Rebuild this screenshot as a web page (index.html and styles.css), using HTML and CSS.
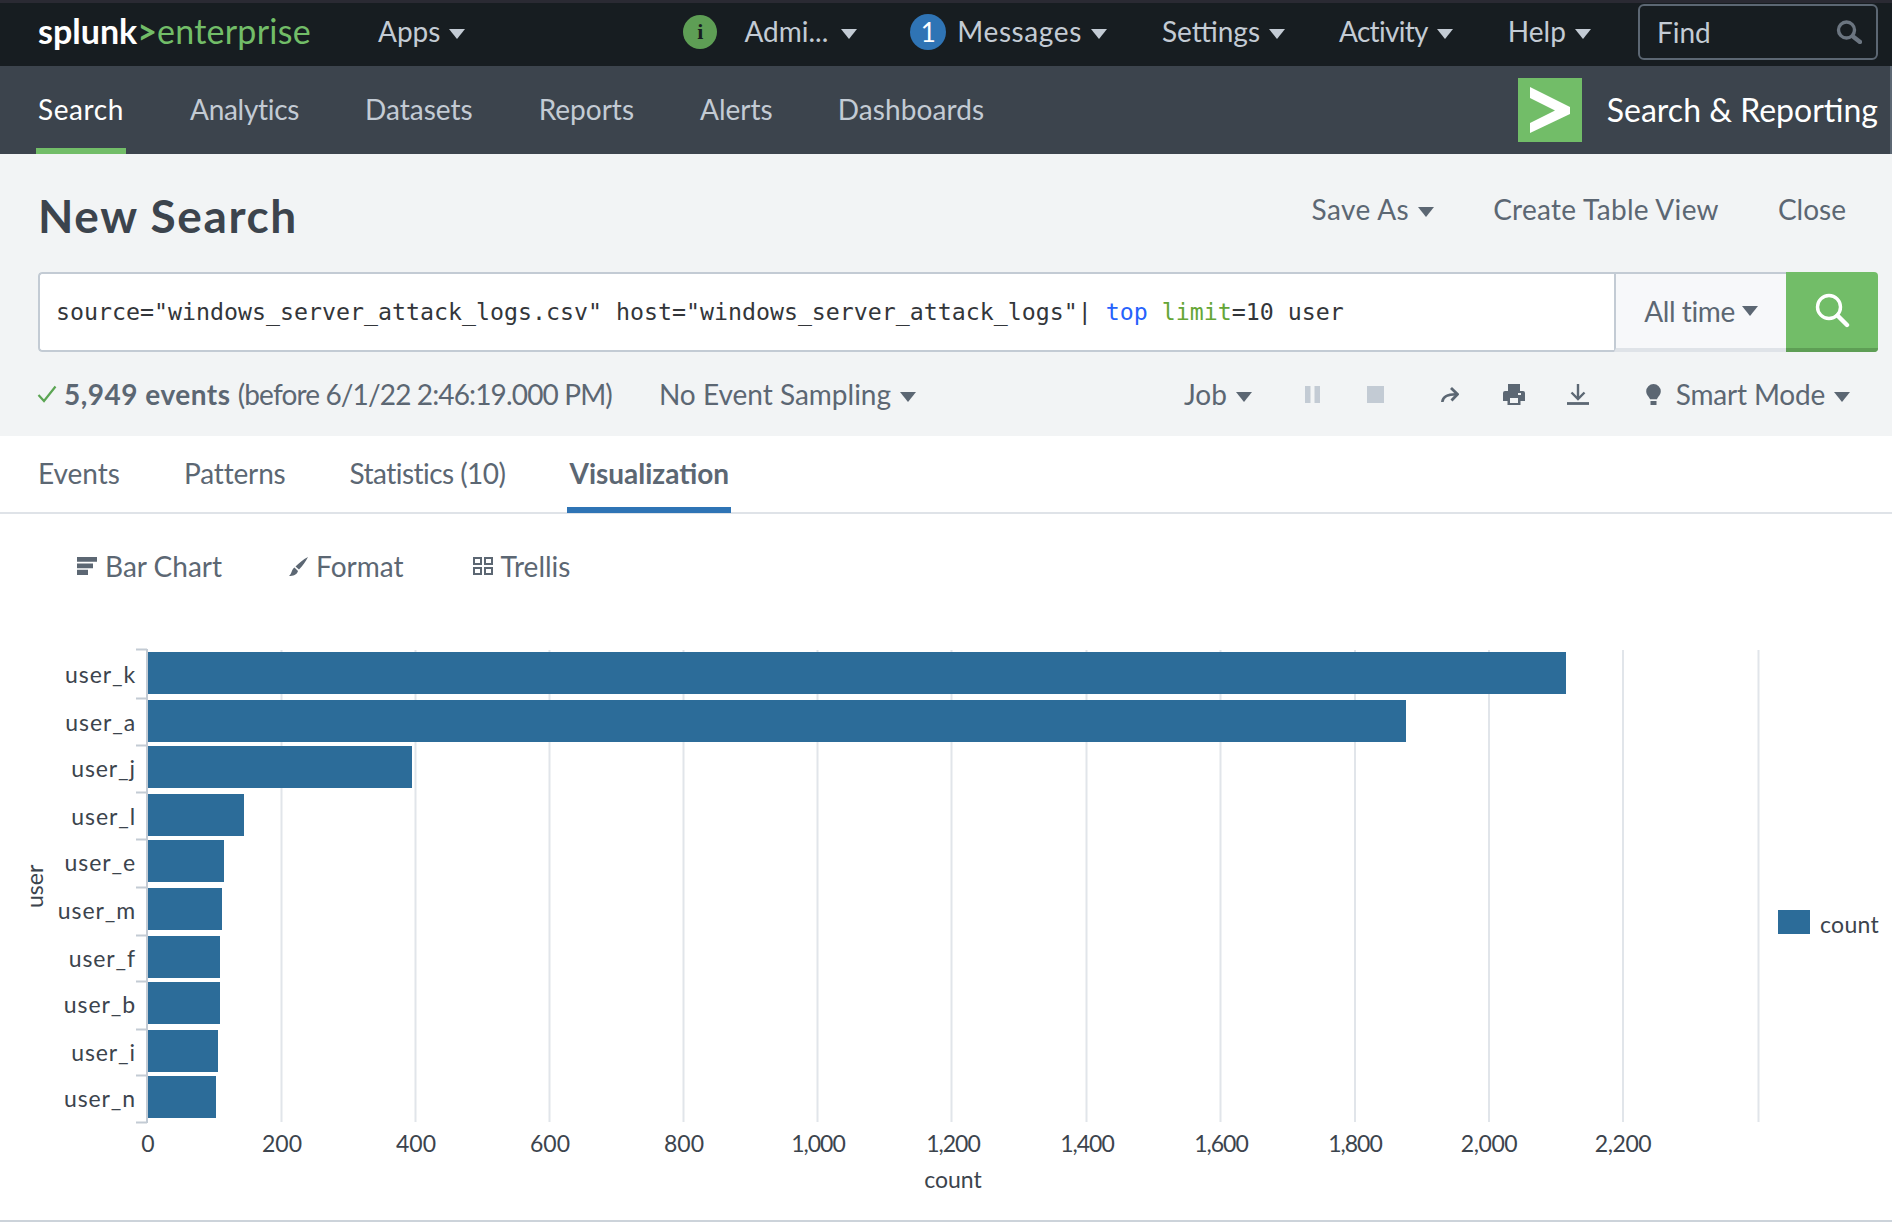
FILE: index.html
```html
<!DOCTYPE html>
<html lang="en">
<head>
<meta charset="utf-8">
<title>New Search</title>
<link rel="stylesheet" href="styles.css">
</head>
<body>
<header class="topbar">
  <div class="logo"><span class="logo-a">splunk</span><span class="logo-gt">&gt;</span><span class="logo-b">enterprise</span></div>
  <div class="top-item apps">Apps<i class="caret"></i></div>
  <div class="info-dot">i</div>
  <div class="top-item admin">Admi...<i class="caret wide"></i></div>
  <div class="msg-dot">1</div>
  <div class="top-item msgs">Messages<i class="caret"></i></div>
  <div class="top-item settings">Settings<i class="caret"></i></div>
  <div class="top-item activity">Activity<i class="caret"></i></div>
  <div class="top-item help">Help<i class="caret"></i></div>
  <div class="find"><span>Find</span>
    <svg class="find-icon" viewBox="0 0 26 24" width="26" height="24"><circle cx="10.500" cy="10" r="8" fill="none" stroke="#6b7580" stroke-width="3.400"/><path d="M17 16.500 24 22" stroke="#6b7580" stroke-width="4.400" stroke-linecap="round"/></svg>
  </div>
</header>

<nav class="appbar">
  <a class="app-link active">Search</a>
  <a class="app-link tight">Analytics</a>
  <a class="app-link">Datasets</a>
  <a class="app-link">Reports</a>
  <a class="app-link">Alerts</a>
  <a class="app-link dash">Dashboards</a>
  <div class="app-brand">
    <svg class="app-logo" viewBox="0 0 64 64" width="64" height="64"><rect width="64" height="64" fill="#72bd68"/><path d="M12 9 52 29V36L12 55V45L37 32.500 12 20Z" fill="#fff"/></svg>
    <span class="app-title">Search &amp; Reporting</span>
  </div>
</nav>

<section class="search-head">
  <div class="title-row">
    <h1 class="title">New Search</h1>
    <div class="title-actions">
      <span class="act save">Save As<i class="caret dark"></i></span>
      <span class="act create">Create Table View</span>
      <span class="act">Close</span>
    </div>
  </div>
  <div class="search-bar">
    <div class="query"><span class="query-text">source="windows_server_attack_logs.csv" host="windows_server_attack_logs"| <span class="q-cmd">top</span> <span class="q-arg">limit</span>=10 user</span></div>
    <div class="time">All time<i class="caret dark"></i></div>
    <div class="go">
      <svg viewBox="0 0 36 36" width="36" height="36"><circle cx="15" cy="15" r="11.500" fill="none" stroke="#fff" stroke-width="3.400"/><path d="M23.500 23.500 33 33" stroke="#fff" stroke-width="4.400" stroke-linecap="round"/></svg>
    </div>
  </div>
  <div class="status-row">
    <svg class="check" viewBox="0 0 20 18" width="20" height="18"><path d="M1.500 10 7 16 18.500 1.500" fill="none" stroke="#5ba553" stroke-width="2.200"/></svg>
    <span class="count"><b>5,949 events</b> <span class="before">(before 6/1/22 2:46:19.000 PM)</span></span>
    <span class="sampling">No Event Sampling<i class="caret dark"></i></span>
    <div class="job-tools">
      <span class="job">Job<i class="caret dark"></i></span>
      <svg class="tool pause" viewBox="0 0 15 17" width="15" height="17"><path d="M0 0h5.500v17H0zM9.500 0H15v17H9.500z" fill="#c3cbd4"/></svg>
      <svg class="tool stop" viewBox="0 0 17 17" width="17" height="17"><rect width="17" height="17" fill="#c3cbd4"/></svg>
      <svg class="tool share" viewBox="0 0 18 15" width="18" height="15"><path d="M1.300 15C1.800 9.500 6 7.300 15 7.300" fill="none" stroke="#5c6773" stroke-width="2.600"/><path d="M10 1 16.500 7.300 10.500 13.500" fill="none" stroke="#5c6773" stroke-width="2.800"/></svg>
      <svg class="tool print" viewBox="0 0 22 21" width="22" height="21"><path d="M5 0h12v7h3a2 2 0 0 1 2 2v8h-4.500v4h-13v-4H0V9a2 2 0 0 1 2-2h3Z" fill="#5c6773"/><path d="M7 14h8v5H7z" fill="#f2f4f5"/><path d="M15 9h3v2h-3z" fill="#f2f4f5"/></svg>
      <svg class="tool dl" viewBox="0 0 22 21" width="22" height="21"><path d="M11 0v14" stroke="#5c6773" stroke-width="2.400"/><path d="M4.500 8.500 11 15l6.500-6.500" fill="none" stroke="#5c6773" stroke-width="2.400"/><path d="M0 19.500h22" stroke="#5c6773" stroke-width="2.800"/></svg>
      <svg class="tool bulb" viewBox="0 0 15 21" width="15" height="21"><path d="M7.500 0a7.300 7.300 0 0 1 7.300 7.300c0 3.700-3 5.500-3.800 8H4c-.8-2.500-3.800-4.300-3.800-8A7.300 7.300 0 0 1 7.500 0Z" fill="#5c6773"/><rect x="4.500" y="17" width="6" height="4" fill="#5c6773"/></svg>
      <span class="mode">Smart Mode<i class="caret dark"></i></span>
    </div>
  </div>
</section>

<nav class="tabs">
  <a class="tab">Events</a>
  <a class="tab patterns">Patterns</a>
  <a class="tab stats">Statistics (10)</a>
  <a class="tab current">Visualization</a>
</nav>

<div class="viz-tools">
  <span class="viz-tool bar-tool"><svg viewBox="0 0 20 18" width="20" height="18"><path d="M0 0h20v4.800H0zM0 6.400h16v4.800H0zM0 12.800h11V18H0z" fill="#5c6773"/></svg>Bar Chart</span>
  <span class="viz-tool format-tool"><svg viewBox="0 0 19 19" width="19" height="19"><path d="M19 0C16.500 5 13.500 9 10 12.500L6.500 9.500C10 6 14 2.500 19 0ZM5.500 10.500 9 14C8 18 4 19 0 19 3 17 2.500 12 5.500 10.500Z" fill="#5c6773"/></svg>Format</span>
  <span class="viz-tool trellis-tool"><svg viewBox="0 0 20 18" width="20" height="18"><path d="M1 1h7v6H1zM12 1h7v6h-7zM1 11h7v6H1zM12 11h7v6h-7z" fill="none" stroke="#5c6773" stroke-width="2"/></svg>Trellis</span>
</div>

<svg class="chart" viewBox="0 620 1892 600" width="1892" height="600">
  <g class="grid">
    <path d="M281.500 650V1122M415.500 650V1122M549.500 650V1122M683.500 650V1122M817.500 650V1122M951.500 650V1122M1086.500 650V1122M1220.500 650V1122M1355 650V1122M1489 650V1122M1623 650V1122M1758.500 650V1122"/>
  </g>
  <g class="bars">
    <rect x="148" y="652" width="1418" height="42"/>
    <rect x="148" y="700" width="1258" height="42"/>
    <rect x="148" y="746" width="264" height="42"/>
    <rect x="148" y="794" width="96" height="42"/>
    <rect x="148" y="840" width="76" height="42"/>
    <rect x="148" y="888" width="74" height="42"/>
    <rect x="148" y="936" width="72" height="42"/>
    <rect x="148" y="982" width="72" height="42"/>
    <rect x="148" y="1030" width="70" height="42"/>
    <rect x="148" y="1076" width="68" height="42"/>
  </g>
  <path class="axis" d="M147 649V1123M136 649.500H147M136 698.500H147M136 745.500H147M136 792.500H147M136 839.500H147M136 887.500H147M136 935.500H147M136 981.500H147M136 1029.500H147M136 1075.500H147M136 1122.500H147"/>
  <g class="ylabels">
    <text x="136" y="683">user_k</text>
    <text x="136" y="731">user_a</text>
    <text x="136" y="777">user_j</text>
    <text x="136" y="825">user_l</text>
    <text x="136" y="871">user_e</text>
    <text x="136" y="919">user_m</text>
    <text x="136" y="967">user_f</text>
    <text x="136" y="1013">user_b</text>
    <text x="136" y="1061">user_i</text>
    <text x="136" y="1107">user_n</text>
  </g>
  <g class="xlabels">
    <text x="148" y="1152">0</text>
    <text x="282" y="1152">200</text>
    <text x="416" y="1152">400</text>
    <text x="550" y="1152">600</text>
    <text x="684" y="1152">800</text>
    <text class="thou" x="818" y="1152">1,000</text>
    <text class="thou" x="953" y="1152">1,200</text>
    <text class="thou" x="1087" y="1152">1,400</text>
    <text class="thou" x="1221" y="1152">1,600</text>
    <text class="thou" x="1355" y="1152">1,800</text>
    <text class="two" x="1489" y="1152">2,000</text>
    <text class="two" x="1623" y="1152">2,200</text>
    <text x="953" y="1188">count</text>
  </g>
  <text class="ytitle" transform="translate(43 908) rotate(-90)">user</text>
  <rect class="swatch" x="1778" y="910" width="32" height="24"/>
  <text class="legend" x="1820" y="933">count</text>
</svg>
</body>
</html>
```
FILE: styles.css
```css
* { box-sizing: border-box; }
html, body { margin: 0; padding: 0; }
body {
  width: 1892px;
  height: 1222px;
  overflow: hidden;
  background: #fff;
  font-family: "Lato", "Open Sans", sans-serif;
  color: #5c6773;
  border-bottom: 2px solid #ccd3da;
}

.caret {
  display: inline-block;
  width: 0;
  height: 0;
  margin-left: 9px;
  border-left: 8px solid transparent;
  border-right: 8px solid transparent;
  border-top: 10px solid #c3cbd4;
  vertical-align: 3px;
}
.caret.dark { border-top-color: #5c6773; }
.caret.wide { margin-left: 13px; }

/* top bar */
.topbar {
  height: 66px;
  display: flex;
  align-items: center;
  background: #171d21;
  border-top: 3px solid #2a2a33;
  padding: 0 0 6px 38px;
  font-size: 28px;
  color: #c3cbd4;
}
.logo { width: 273px; font-size: 34px; white-space: nowrap; margin-bottom: 2px; }
.logo-a { color: #fff; font-weight: 700; }
.logo-gt { color: #72bd68; font-weight: 700; }
.logo-b { color: #72bd68; letter-spacing: 0.250px; }
.top-item { white-space: nowrap; margin-bottom: 2px; }
.apps { margin-left: 67px; }
.info-dot {
  margin-left: 218px;
  width: 34px; height: 34px; border-radius: 50%;
  background: #5e9e55; color: #171d21;
  display: flex; align-items: center; justify-content: center;
  font: 700 22px "Liberation Serif", serif;
}
.admin { margin-left: 27px; }
.msg-dot {
  margin-left: 53px;
  width: 36px; height: 36px; border-radius: 50%;
  background: #2f74b5; color: #fff;
  display: flex; align-items: center; justify-content: center;
  font-size: 26px;
}
.msgs { margin-left: 11px; letter-spacing: 0.600px; }
.settings { margin-left: 55px; }
.activity { margin-left: 54px; letter-spacing: -0.700px; }
.help { margin-left: 55px; }
.find {
  margin-left: auto;
  margin-right: 14px;
  width: 240px; height: 56px;
  display: flex; align-items: center; justify-content: space-between;
  padding: 0 14px 0 17px;
  border: 2px solid #5c6773;
  border-radius: 6px;
}
.find-icon { display: block; }

/* app bar */
.appbar {
  height: 88px;
  display: flex;
  align-items: stretch;
  gap: 62px;
  padding-left: 36px;
  background: #3c444d;
  border-right: 2px solid #5c6773;
  font-size: 28px;
}
.app-link {
  display: flex;
  align-items: center;
  padding: 4px 2px 0;
  color: #c3cbd4;
  border-bottom: 6px solid transparent;
}
.app-link.active { color: #fff; border-bottom-color: #72bd68; letter-spacing: 0.600px; }
.app-link.tight { letter-spacing: -0.300px; }
.app-link.dash { margin-left: -1px; letter-spacing: 0.100px; }
.app-brand {
  margin-left: auto;
  padding-right: 12px;
  display: flex;
  align-items: center;
  gap: 25px;
}
.app-logo { display: block; }
.app-title { color: #fff; font-size: 32px; white-space: nowrap; margin-bottom: 2px; }

/* search header */
.search-head {
  height: 282px;
  background: #f2f4f5;
  padding: 0 14px 0 38px;
}
.title-row { height: 118px; display: flex; align-items: flex-start; justify-content: space-between; }
.title { margin: 34px 0 0; font-size: 46px; line-height: 56px; font-weight: 700; color: #3c444d; letter-spacing: 1.600px; }
.title-actions { display: flex; gap: 59px; margin-top: 38px; padding-right: 32px; font-size: 28px; }
.act { white-space: nowrap; }
.save { letter-spacing: 0.400px; }
.create { letter-spacing: 0.300px; }

.search-bar {
  height: 80px;
  display: flex;
  border-radius: 4px;
  overflow: hidden;
}
.query {
  flex: 1;
  display: flex; align-items: center; white-space: pre;
  padding: 0 0 2px 16px;
  background: #fff;
  border: 2px solid #c3cbd4;
  border-right: none;
  border-radius: 4px 0 0 4px;
  font-family: "DejaVu Sans Mono", monospace;
  font-size: 23.250px;
  color: #33363a;
}
.q-cmd { color: #2662fc; }
.q-arg { color: #65a637; }
.time {
  width: 172px;
  display: flex; align-items: center; justify-content: center;
  background: #f7f8fa;
  border: 2px solid #c3cbd4;
  border-right: none;
  border-bottom: 4px solid #dfe3e8;
  font-size: 28px;
  white-space: nowrap;
  letter-spacing: -0.400px;
}
.time .caret { margin-left: 7px; }
.go {
  width: 92px;
  display: flex; align-items: center; justify-content: center;
  background: #72bd68;
  border-bottom: 4px solid #5e9e55;
}

.status-row {
  height: 84px;
  display: flex;
  align-items: center;
  font-size: 28px;
}
.check { margin-left: -1px; }
.count { margin-left: 7px; white-space: nowrap; }
.count b { font-weight: 700; letter-spacing: 0.500px; }
.before { letter-spacing: -0.860px; }
.sampling { margin-left: 47px; white-space: nowrap; }
.job-tools { margin-left: auto; display: flex; align-items: center; padding-right: 28px; }
.job { margin-right: 53px; white-space: nowrap; }
.tool { display: block; }
.pause { margin-right: 47px; }
.stop { margin-right: 57px; }
.share { margin-right: 44px; }
.print { margin-right: 42px; }
.dl { margin-right: 57px; }
.bulb { margin-right: 15px; }
.mode { white-space: nowrap; letter-spacing: -0.200px; }

/* tabs */
.tabs {
  height: 78px;
  display: flex;
  align-items: stretch;
  gap: 60px;
  padding-left: 36px;
  border-bottom: 2px solid #dfe3e8;
  font-size: 28px;
}
.tab { display: flex; align-items: center; padding: 2px 2px 0; border-bottom: 6px solid transparent; margin-bottom: -1px; }
.tab.patterns { letter-spacing: -0.150px; }
.tab.stats { letter-spacing: -0.550px; }
.tab.current { font-weight: 700; border-bottom-color: #2f74b5; }

/* viz toolbar */
.viz-tools {
  height: 106px;
  display: flex;
  align-items: flex-start;
  padding: 35px 0 0 77px;
  font-size: 28px;
}
.viz-tool { display: flex; align-items: center; gap: 8px; white-space: nowrap; }
.format-tool { margin-left: 67px; }
.trellis-tool { margin-left: 69px; }

/* chart */
.chart { display: block; }
.grid path { stroke: #e1e5ea; stroke-width: 2; fill: none; }
.bars rect, .swatch { fill: #2c6c99; }
.axis { stroke: #c3cbd4; stroke-width: 2; fill: none; }
.chart text { font-family: "Lato", "Open Sans", sans-serif; font-size: 23px; fill: #3c444d; }
.ylabels text { text-anchor: end; letter-spacing: 0.900px; }
.xlabels text { text-anchor: middle; }
.xlabels .thou { letter-spacing: -1px; }
.xlabels .two { letter-spacing: -0.400px; }
.legend { letter-spacing: 0.300px; }
```
